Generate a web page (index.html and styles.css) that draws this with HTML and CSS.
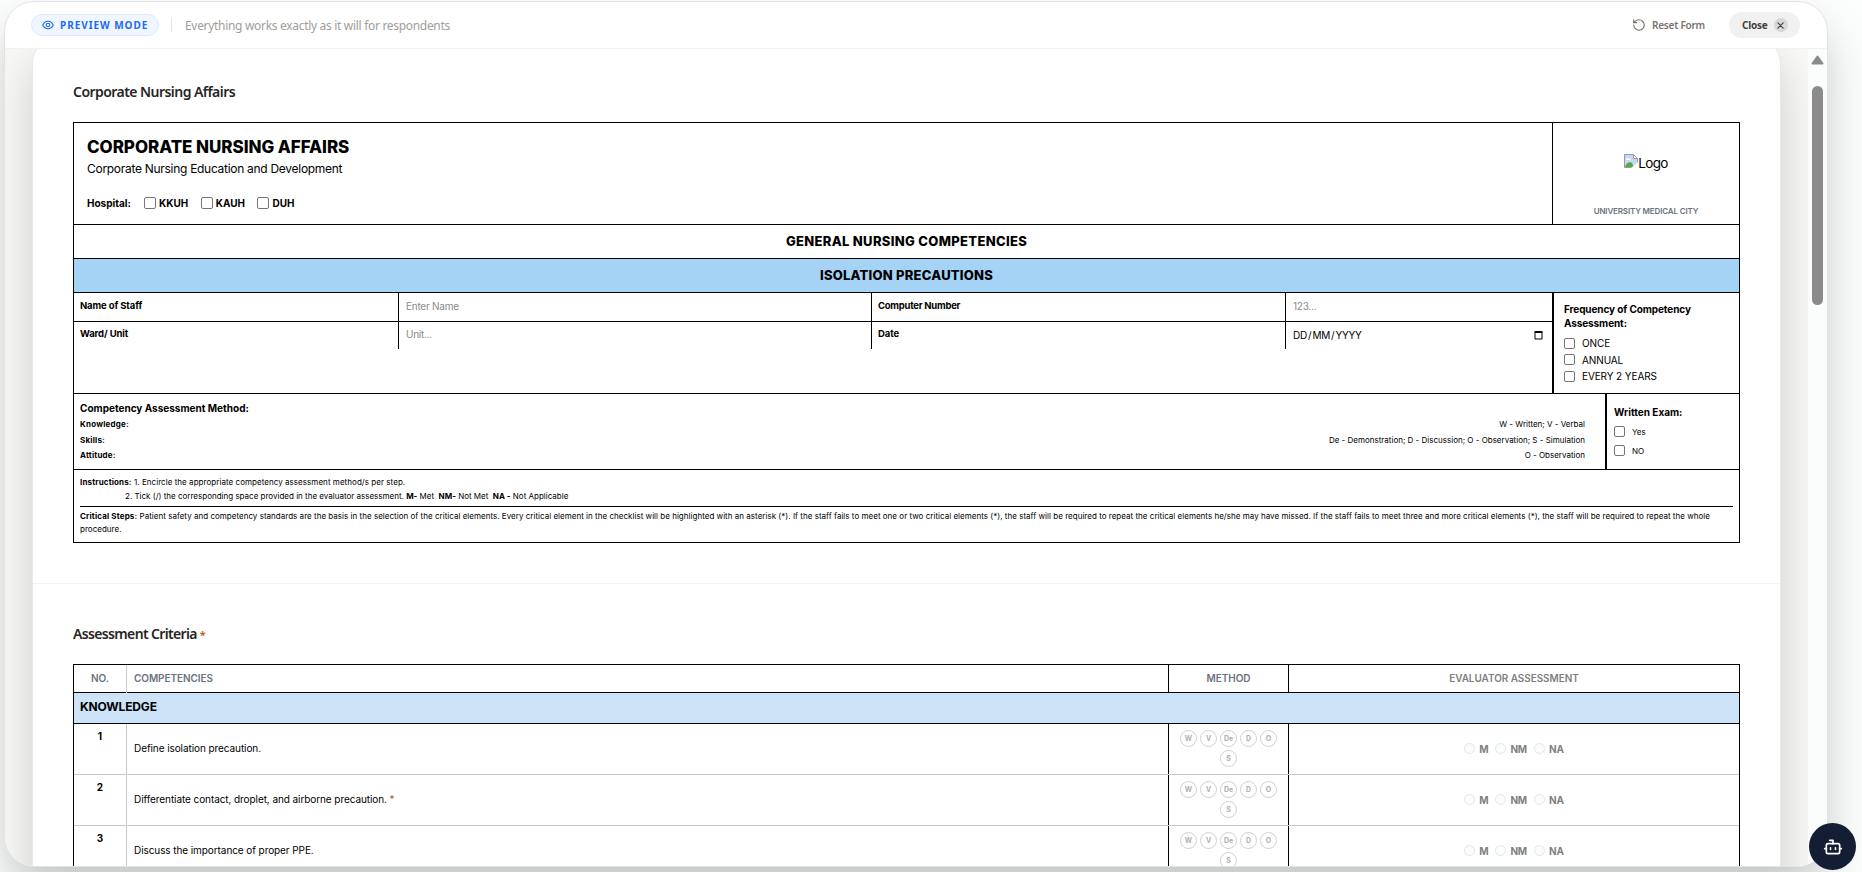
FILE: index.html
```
<!DOCTYPE html>
<html lang="en">
<head>
    <meta charset="UTF-8">
    <meta name="viewport" content="width=device-width, initial-scale=1.0">
    <title>Form Preview</title>
    <link rel="stylesheet" href="styles.css">
</head>
<body>
    <div class="modal">
        <header class="topbar">
            <div class="preview-pill">
                <svg width="12" height="12" viewBox="0 0 24 24" fill="none" stroke="currentColor" stroke-width="2.2" stroke-linecap="round" stroke-linejoin="round"><path d="M1.5 12S5 4.5 12 4.5 22.500 12 22.500 12 19 19.500 12 19.500 1.500 12 1.500 12z"/><circle cx="12" cy="12" r="3.500"/></svg>
                <span>PREVIEW MODE</span>
            </div>
            <div class="divider"></div>
            <p class="hint">Everything works exactly as it will for respondents</p>
            <button class="reset-btn">
                <svg width="14" height="14" viewBox="0 0 24 24" fill="none" stroke="currentColor" stroke-width="2" stroke-linecap="round" stroke-linejoin="round"><path d="M3 12a9 9 0 1 0 9-9 9.750 9.750 0 0 0-6.740 2.740L3 8"/><path d="M3 3v5h5"/></svg>
                <span>Reset Form</span>
            </button>
            <button class="close-btn">
                <span>Close</span>
                <i class="close-x"><svg width="7" height="7" viewBox="0 0 8 8" stroke="currentColor" stroke-width="1.300" stroke-linecap="round"><path d="M1 1l6 6M7 1L1 7"/></svg></i>
            </button>
        </header>

        <div class="content">
            <main class="card">
                <section class="block">
                    <h2 class="block-title">Corporate Nursing Affairs</h2>

                    <div class="sheet">
                        <div class="sheet-head">
                            <div class="org">
                                <h1>CORPORATE NURSING AFFAIRS</h1>
                                <p class="dept">Corporate Nursing Education and Development</p>
                                <div class="hospitals">
                                    <b>Hospital:</b>
                                    <label><i class="box"></i>KKUH</label>
                                    <label><i class="box"></i>KAUH</label>
                                    <label><i class="box"></i>DUH</label>
                                </div>
                            </div>
                            <div class="logo">
                                <div class="logo-img">
                                    <svg width="14" height="14" viewBox="0 0 14 14"><path d="M.5.5h9l4 4v9H.5z" fill="#c3d9f7" stroke="#9a9a9a"/><path d="M9.500.5v4h4z" fill="#fff" stroke="#9a9a9a"/><path d="M2 6c0-2 2-2.500 3-1.500 2-.5 2 1.500 1 1.500z" fill="#fff"/><path d="M1 13c1-4 5-6 7-4l2 4z" fill="#5aa845"/><path d="M7 14l7-6v6z" fill="#fff"/></svg>
                                    <span>Logo</span>
                                </div>
                                <p>UNIVERSITY MEDICAL CITY</p>
                            </div>
                        </div>
                        <div class="band">GENERAL NURSING COMPETENCIES</div>
                        <div class="band blue">ISOLATION PRECAUTIONS</div>

                        <div class="staff">
                            <div class="staff-grid">
                                <div class="cell">Name of Staff</div>
                                <div class="cell field">Enter Name</div>
                                <div class="cell tight">Computer Number</div>
                                <div class="cell field last">123...</div>
                                <div class="cell low">Ward/ Unit</div>
                                <div class="cell low field">Unit...</div>
                                <div class="cell low">Date</div>
                                <div class="cell low last date">
                                    <span>DD / MM / YYYY</span>
                                    <svg width="9" height="10" viewBox="0 0 9 10"><path d="M1 2.500h7v6.500H1z" fill="none" stroke="#000"/><path d="M.5 1h8v2h-8z"/></svg>
                                </div>
                            </div>
                            <div class="frequency">
                                <b>Frequency of Competency<br>Assessment:</b>
                                <label><i class="box sm"></i>ONCE</label>
                                <label><i class="box sm"></i>ANNUAL</label>
                                <label><i class="box sm"></i>EVERY 2 YEARS</label>
                            </div>
                        </div>

                        <div class="methods">
                            <div class="method-list">
                                <b class="method-title">Competency Assessment Method:</b>
                                <div><b>Knowledge:</b><span>W - Written; V - Verbal</span></div>
                                <div><b>Skills:</b><span>De - Demonstration; D - Discussion; O - Observation; S - Simulation</span></div>
                                <div><b>Attitude:</b><span>O - Observation</span></div>
                            </div>
                            <div class="exam">
                                <b>Written Exam:</b>
                                <label><i class="box sm"></i>Yes</label>
                                <label><i class="box sm"></i>NO</label>
                            </div>
                        </div>

                        <div class="notes">
                            <p class="first"><b>Instructions:</b> 1. Encircle the appropriate competency assessment method/s per step.</p>
                            <p class="second">2. Tick (/) the corresponding space provided in the evaluator assessment. <b>M-</b> Met&nbsp; <b>NM-</b> Not Met&nbsp; <b>NA -</b> Not Applicable</p>
                            <p class="critical"><b>Critical Steps:</b> Patient safety and competency standards are the basis in the selection of the critical elements. Every critical element in the checklist will be highlighted with an asterisk (*). If the staff fails to meet one or two critical elements (*), the staff will be required to repeat the critical elements he/she may have missed. If the staff fails to meet three and more critical elements (*), the staff will be required to repeat the whole<br>procedure.</p>
                        </div>
                    </div>
                </section>

                <section class="block criteria">
                    <h2 class="block-title">Assessment Criteria <em>*</em></h2>

                    <div class="grid">
                        <div class="row head">
                            <div class="no">NO.</div>
                            <div class="text">COMPETENCIES</div>
                            <div class="method">METHOD</div>
                            <div class="eval">EVALUATOR ASSESSMENT</div>
                        </div>
                        <div class="group">KNOWLEDGE</div>
                        <div class="row">
                            <div class="no">1</div>
                            <div class="text">Define isolation precaution.</div>
                            <div class="method"><i>W</i><i>V</i><i>De</i><i>D</i><i>O</i><i>S</i></div>
                            <div class="eval"><i></i><b>M</b><i></i><b>NM</b><i></i><b>NA</b></div>
                        </div>
                        <div class="row">
                            <div class="no">2</div>
                            <div class="text">Differentiate contact, droplet, and airborne precaution. <em>*</em></div>
                            <div class="method"><i>W</i><i>V</i><i>De</i><i>D</i><i>O</i><i>S</i></div>
                            <div class="eval"><i></i><b>M</b><i></i><b>NM</b><i></i><b>NA</b></div>
                        </div>
                        <div class="row">
                            <div class="no">3</div>
                            <div class="text">Discuss the importance of proper PPE.</div>
                            <div class="method"><i>W</i><i>V</i><i>De</i><i>D</i><i>O</i><i>S</i></div>
                            <div class="eval"><i></i><b>M</b><i></i><b>NM</b><i></i><b>NA</b></div>
                        </div>
                    </div>
                </section>
            </main>
            <div class="scrollbar">
                <svg width="13" height="10" viewBox="0 0 13 10"><path d="M6.500 1.500L11.500 8.500H1.500z" fill="#8b8b8b" stroke="#8b8b8b" stroke-width="2" stroke-linejoin="round"/></svg>
                <div class="thumb"></div>
            </div>
        </div>
    </div>

    <button class="bot">
        <svg width="20" height="20" viewBox="0 0 24 24" fill="none" stroke="#fff" stroke-width="2" stroke-linecap="round" stroke-linejoin="round"><path d="M12 8V4H8"/><rect width="16" height="12" x="4" y="8" rx="2"/><path d="M2 14h2M20 14h2M15 13v2M9 13v2"/></svg>
    </button>
</body>
</html>
```

FILE: styles.css
```
* {
    box-sizing: border-box;
    margin: 0;
    padding: 0;
}
body {
    width: 1862px;
    height: 872px;
    overflow: hidden;
    background: #fcfdfd;
    font-family: Inter, "Liberation Sans", sans-serif;
    color: #000;
}
button {
    border: 0;
    background: none;
    font-family: inherit;
}
i, em {
    font-style: normal;
}
b {
    font-weight: 700;
}
em {
    color: #c2570c;
}
.modal {
    width: 1824px;
    height: 866px;
    margin: 1px 0 0 4px;
    border: 1px solid #e2e3e2;
    border-radius: 30px;
    overflow: hidden;
    background: #fff;
    box-shadow: 0 25px 50px -6px rgba(0, 0, 0, .25);
    display: flex;
    flex-direction: column;
}

/* top bar */
.topbar {
    flex: none;
    height: 47px;
    padding: 0 27px 0 26px;
    border-bottom: 1px solid #f1f1f0;
    display: flex;
    align-items: center;
    font-family: "Noto Sans", "Open Sans", sans-serif;
}
.preview-pill {
    width: 128px;
    height: 22px;
    padding-left: 10px;
    border: 1px solid #dbeafe;
    border-radius: 11px;
    background: #eff6ff;
    color: #1f6af0;
    display: flex;
    align-items: center;
    gap: 6px;
    font-size: 10px;
    font-weight: 700;
    letter-spacing: .95px;
    white-space: nowrap;
}
.divider {
    width: 1px;
    height: 14px;
    margin: 0 13px 0 12px;
    background: #e7e5e4;
}
.hint {
    flex: 1;
    padding-top: 1px;
    font-size: 12px;
    color: #a09d9a;
    letter-spacing: -.31px;
}
.reset-btn {
    display: flex;
    align-items: center;
    gap: 6px;
    margin-right: 24px;
    color: #78716c;
    font-size: 10px;
    font-weight: 600;
    letter-spacing: -.22px;
}
.close-btn {
    width: 71px;
    height: 26px;
    padding-left: 13px;
    border-radius: 13px;
    background: #f1f1f1;
    color: #44403c;
    display: flex;
    align-items: center;
    gap: 6px;
    font-size: 10px;
    font-weight: 700;
    letter-spacing: -.2px;
}
.close-x {
    width: 14px;
    height: 14px;
    border-radius: 7px;
    background: #d8d8d8;
    display: flex;
    align-items: center;
    justify-content: center;
}

/* scrolled area */
.content {
    flex: 1;
    min-height: 0;
    overflow: hidden;
    background: #f8f8f6;
    display: flex;
    justify-content: space-between;
}
.card {
    width: 1749px;
    height: 940px;
    margin: -13px 0 0 27px;
    border: 1px solid #e9e9e8;
    border-radius: 28px;
    background: #fff;
    box-shadow: 0 20px 50px -4px rgba(0, 0, 0, .2);
}
.block {
    padding: 44px 40px 0;
    height: 547px;
    border-bottom: 1px solid #f3f3f2;
}
.block-title {
    height: 41px;
    font-family: "Noto Sans", "Open Sans", sans-serif;
    font-size: 14px;
    line-height: 21px;
    font-weight: 600;
    color: #292524;
    letter-spacing: -.55px;
}
.block-title em {
    font-size: 11px;
}
.scrollbar {
    width: 19px;
    background: #fbfdfc;
    display: flex;
    flex-direction: column;
    align-items: center;
    padding-top: 6px;
}
.thumb {
    width: 11px;
    height: 219px;
    margin-top: 21px;
    border-radius: 6px;
    background: #8b8b8b;
}
.box {
    flex: none;
    width: 12px;
    height: 12px;
    border: 1px solid #767676;
    border-radius: 2px;
    background: #fff;
}
.box.sm {
    width: 11px;
    height: 11px;
}

/* header sheet */
.sheet {
    height: 421px;
    border: 1px solid #000;
    display: flex;
    flex-direction: column;
}
.sheet-head {
    height: 102px;
    border-bottom: 1px solid #000;
    display: flex;
}
.org {
    flex: 1;
    padding: 14px 13px 0;
}
.org h1 {
    font-size: 17px;
    line-height: 20px;
    font-weight: 800;
    letter-spacing: -.06px;
}
.dept {
    margin-top: 4px;
    font-size: 12px;
    line-height: 16px;
    letter-spacing: -.29px;
}
.hospitals {
    display: flex;
    align-items: center;
    margin-top: 19px;
    font-size: 10px;
    line-height: 14px;
    font-weight: 700;
}
.hospitals b {
    width: 44px;
    margin-right: 13px;
}
.hospitals label {
    display: flex;
    align-items: center;
    gap: 3px;
    margin-right: 12.500px;
}
.logo {
    width: 187px;
    border-left: 1px solid #000;
    text-align: center;
}
.logo-img {
    display: flex;
    justify-content: center;
    margin-top: 31px;
    font-size: 13.500px;
    line-height: 19px;
    letter-spacing: -.6px;
}
.logo p {
    margin-top: 32px;
    font-size: 8px;
    line-height: 12px;
    font-weight: 600;
    color: #6b7280;
    letter-spacing: -.15px;
}
.band {
    height: 34px;
    border-bottom: 1px solid #000;
    text-align: center;
    font-size: 13px;
    line-height: 33px;
    font-weight: 800;
    letter-spacing: .32px;
}
.band.blue {
    background: #a5d3f6;
    letter-spacing: .22px;
}
.staff {
    height: 101px;
    border-bottom: 1px solid #000;
    display: flex;
}
.staff-grid {
    flex: 1;
    display: grid;
    grid-template-columns: 325px 473px 414px 1fr;
    grid-template-rows: 29px 27px;
}
.cell {
    padding: 0 6px;
    border-right: 1px solid #000;
    border-bottom: 1px solid #000;
    font-size: 9.500px;
    line-height: 26px;
    font-weight: 700;
    letter-spacing: -.12px;
}
.cell.tight {
    letter-spacing: -.25px;
}
.cell.field {
    font-size: 10px;
    font-weight: 400;
    color: #8a8a8a;
    padding-left: 7px;
    letter-spacing: -.25px;
}
.cell.low {
    border-bottom: 0;
    line-height: 24px;
}
.cell.last {
    border-right: 0;
}
.cell.date {
    display: flex;
    justify-content: space-between;
    align-items: center;
    padding: 0 9px 2px 7px;
    font-size: 10px;
    font-weight: 400;
    letter-spacing: -.25px;
    word-spacing: -1.500px;
}
.frequency {
    width: 187px;
    border-left: 2px solid #000;
    padding: 9px 0 0 10px;
    font-size: 10px;
    line-height: 14px;
    letter-spacing: -.1px;
}
.frequency b {
    display: block;
    margin-bottom: 5px;
}
.frequency label, .exam label {
    display: flex;
    align-items: center;
    gap: 7px;
}
.frequency label {
    height: 16.500px;
}
.methods {
    height: 76px;
    border-bottom: 1px solid #000;
    display: flex;
}
.method-list {
    flex: 1;
    padding: 6px 20px 0 6px;
    font-size: 8px;
}
.method-title {
    display: block;
    height: 16px;
    font-size: 10px;
    line-height: 16px;
}
.method-list div {
    display: flex;
    justify-content: space-between;
    height: 15.500px;
    line-height: 16px;
}
.method-list div b {
    letter-spacing: .2px;
}
.exam {
    width: 134px;
    border-left: 2px solid #000;
    padding: 10px 0 0 7px;
    font-size: 8px;
}
.exam b {
    display: block;
    margin-bottom: 2px;
    font-size: 10px;
    line-height: 16px;
}
.exam label {
    height: 19px;
}
.notes {
    padding: 5px 6px 0;
    font-size: 8px;
}
.notes p {
    line-height: 14px;
    white-space: nowrap;
}
.notes .first {
    letter-spacing: .045px;
}
.notes .first b, .notes .critical b {
    letter-spacing: .15px;
}
.notes .second {
    padding-left: 45px;
}
.notes .critical {
    margin-top: 3px;
    padding-top: 3px;
    border-top: 1px solid #000;
    line-height: 13px;
    letter-spacing: .022px;
}

/* criteria table */
.criteria {
    height: auto;
    padding-top: 39px;
    border-bottom: 0;
}
.criteria .block-title {
    letter-spacing: -.65px;
}
.grid {
    border: 1px solid #000;
}
.row {
    height: 51px;
    border-bottom: 1px solid #c8c8c8;
    display: grid;
    grid-template-columns: 53px 1042px 120px 1fr;
    font-size: 10px;
}
.row > div {
    border-right: 1px solid #000;
}
.row > .no {
    padding-top: 5px;
    border-right-color: #c8c8c8;
    text-align: center;
    line-height: 14px;
    font-weight: 700;
}
.row > .text {
    padding-left: 7px;
    line-height: 49px;
    letter-spacing: -.08px;
}
.row > .method {
    padding: 6px 10px 0;
    display: flex;
    flex-wrap: wrap;
    justify-content: center;
    align-content: flex-start;
    gap: 3px;
}
.method i {
    width: 17px;
    height: 17px;
    border: 1px solid #d0d0d0;
    border-radius: 50%;
    color: #b0b0b0;
    font-size: 7px;
    line-height: 16px;
    font-weight: 700;
    text-align: center;
}
.row > .eval {
    padding-bottom: 1px;
    border-right: 0;
    display: flex;
    align-items: center;
    justify-content: center;
    color: #808080;
}
.eval i {
    width: 11px;
    height: 11px;
    margin-right: 4px;
    border: 1px solid #e4e6e5;
    border-radius: 50%;
    background: #fbfdfc;
}
.eval b {
    margin-right: 7px;
    letter-spacing: -.2px;
}
.eval b:last-child {
    margin-right: 0;
}
.row.head {
    height: 28px;
    border-bottom-color: #000;
    font-weight: 600;
    color: #6b7280;
}
.row.head > div {
    padding-top: 0;
    line-height: 27px;
    font-weight: 600;
    letter-spacing: -.06px;
}
.group {
    height: 31px;
    padding-left: 6px;
    border-bottom: 1px solid #000;
    background: #cce3f8;
    font-size: 12px;
    line-height: 28px;
    font-weight: 700;
    letter-spacing: -.15px;
}
.bot {
    position: absolute;
    left: 1809px;
    top: 823px;
    width: 47px;
    height: 47px;
    border-radius: 50%;
    background: #131d33;
    display: flex;
    align-items: center;
    justify-content: center;
}
```
